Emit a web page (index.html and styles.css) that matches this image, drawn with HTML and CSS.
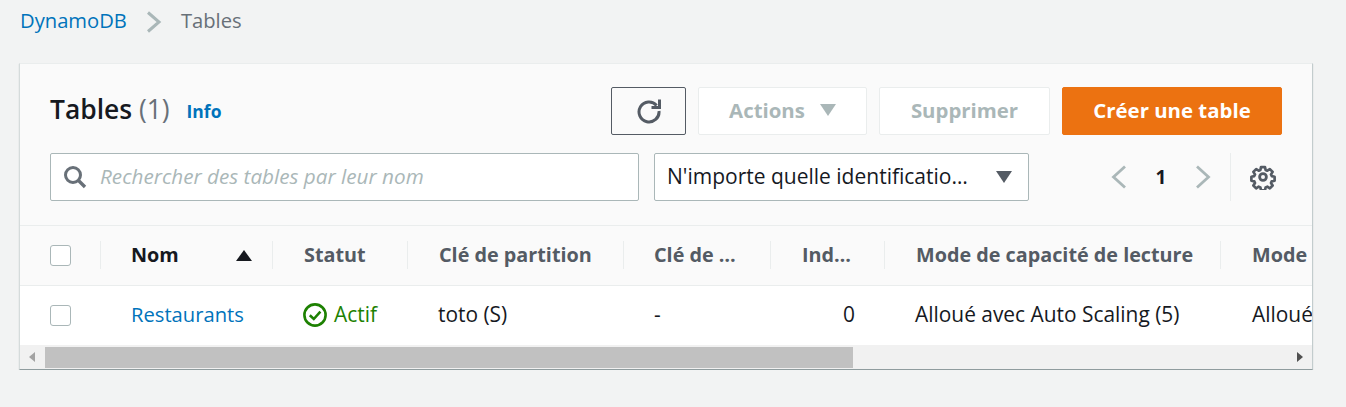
FILE: index.html
```html
<!DOCTYPE html>
<html lang="fr">
<head>
    <meta charset="UTF-8">
    <title>Tables</title>
    <link rel="stylesheet" href="styles.css">
</head>
<body>
    <nav class="crumbs">
        <a class="crumb-link" href="#">DynamoDB</a>
        <svg class="crumb-sep" width="16" height="22" viewBox="0 0 16 22"><path d="M2 1.5 13 11 2 20.5" fill="none" stroke="#aab7b8" stroke-width="3"/></svg>
        <span class="crumb-current">Tables</span>
    </nav>

    <section class="card">
        <header class="card-head">
            <div class="title-row">
                <h1 class="title">Tables <span class="count">(1)</span></h1>
                <a class="info" href="#">Info</a>
                <div class="actions">
                    <button class="btn btn-refresh" aria-label="Actualiser">
                        <svg width="26" height="26" viewBox="0 0 26 26"><path d="M20.6 7.4A10 10 0 1 0 23 13" fill="none" stroke="#545b64" stroke-width="3"/><path d="M23.5 1.5V9.5H15.5" fill="none" stroke="#545b64" stroke-width="3"/></svg>
                    </button>
                    <button class="btn btn-disabled btn-actions">Actions <i class="caret caret-light"></i></button>
                    <button class="btn btn-disabled btn-delete">Supprimer</button>
                    <button class="btn btn-primary">Créer une table</button>
                </div>
            </div>
            <div class="filter-row">
                <div class="search">
                    <svg width="24" height="24" viewBox="0 0 24 24"><circle cx="10" cy="10" r="7.5" fill="none" stroke="#687078" stroke-width="3"/><path d="M15.5 15.5 22 22" stroke="#687078" stroke-width="3.4"/></svg>
                    <span class="search-text">Rechercher des tables par leur nom</span>
                </div>
                <div class="select">
                    <span>N'importe quelle identificatio…</span>
                    <i class="caret"></i>
                </div>
                <div class="pager">
                    <svg width="16" height="24" viewBox="0 0 16 24"><path d="M14 1.5 2.5 12 14 22.5" fill="none" stroke="#aab7b8" stroke-width="2.8"/></svg>
                    <span class="page-num">1</span>
                    <svg width="16" height="24" viewBox="0 0 16 24"><path d="M2 1.5 13.5 12 2 22.5" fill="none" stroke="#aab7b8" stroke-width="2.8"/></svg>
                </div>
                <div class="prefs">
                    <svg width="26" height="26" viewBox="0 0 26 26"><path d="M10.8 2h4.4l.7 3.2 1.9.8 2.8-1.8 3.1 3.1-1.8 2.8.8 1.9 3.2.7v4.4l-3.2.7-.8 1.9 1.8 2.8-3.1 3.1-2.8-1.8-1.9.8-.7 3.2h-4.4l-.7-3.2-1.9-.8-2.8 1.8-3.1-3.1 1.8-2.8-.8-1.9-3.2-.7v-4.4l3.2-.7.8-1.9-1.8-2.8 3.1-3.1 2.8 1.8 1.9-.8z" transform="translate(1.3 1.3) scale(.9)" fill="none" stroke="#545b64" stroke-width="3" stroke-linejoin="round"/><circle cx="13" cy="13" r="3.4" fill="none" stroke="#545b64" stroke-width="2.8"/></svg>
                </div>
            </div>
        </header>

        <div class="table-wrap">
            <table class="tbl">
                <colgroup>
                    <col class="c-check"><col class="c-name"><col class="c-status"><col class="c-key"><col class="c-sort"><col class="c-idx"><col class="c-read"><col class="c-write">
                </colgroup>
                <thead>
                    <tr>
                        <th><div class="th-in th-check"><span class="box"></span></div></th>
                        <th><div class="th-in th-active">Nom <i class="sort-up"></i></div></th>
                        <th><div class="th-in">Statut</div></th>
                        <th><div class="th-in">Clé de partition</div></th>
                        <th><div class="th-in th-sort">Clé de …</div></th>
                        <th><div class="th-in">Ind…</div></th>
                        <th><div class="th-in">Mode de capacité de lecture</div></th>
                        <th><div class="th-in th-last">Mode</div></th>
                    </tr>
                </thead>
                <tbody>
                    <tr>
                        <td class="td-check"><span class="box"></span></td>
                        <td><a class="row-link" href="#">Restaurants</a></td>
                        <td>
                            <span class="status">
                                <svg width="24" height="24" viewBox="0 0 24 24"><circle cx="12" cy="12" r="10.6" fill="none" stroke="#1d8102" stroke-width="2.6"/><path d="M6.8 12.2 10.8 16 17.4 8.6" fill="none" stroke="#1d8102" stroke-width="2.6"/></svg>
                                <span class="status-text">Actif</span>
                            </span>
                        </td>
                        <td class="td-text">toto (S)</td>
                        <td class="td-text">-</td>
                        <td class="td-text num">0</td>
                        <td class="td-text">Alloué avec Auto Scaling (5)</td>
                        <td class="td-text td-last">Alloué</td>
                    </tr>
                </tbody>
            </table>
        </div>

        <div class="scrollbar">
            <span class="arrow arrow-left"></span>
            <span class="thumb"></span>
            <span class="arrow arrow-right"></span>
        </div>
    </section>
</body>
</html>
```

FILE: styles.css
```css
* {
    box-sizing: border-box;
}

body {
    margin: 0;
    background-color: #f2f3f3;
    font-family: "Open Sans", "Noto Sans", Arial, sans-serif;
    font-size: 20.9px;
    color: #16191f;
    overflow: hidden;
}

a {
    text-decoration: none;
    color: #0073bb;
}

.crumbs {
    display: flex;
    align-items: center;
    height: 40px;
    padding-left: 20px;
    font-size: 20.2px;
}

.crumb-sep {
    margin: 3px 19px 0 19px;
}

.crumb-current {
    color: #687078;
}

.card {
    width: 1294px;
    margin: 23px 0 0 19px;
    border-left: 1px solid #d5dbdb;
    border-right: 1px solid #c3cccd;
    border-top: 1px solid #eaeded;
    border-bottom: 1px solid #8f9c9e;
    background-color: #fff;
    box-shadow: 0 1px 1px 0 rgba(0, 28, 36, 0.2);
}

.card-head {
    height: 162px;
    padding: 23px 30px 0 30px;
    background-color: #fafafa;
    border-bottom: 1px solid #eaeded;
}

.title-row {
    display: flex;
    align-items: center;
    height: 48px;
}

.title {
    margin: 0 0 5px 0;
    font-size: 26.4px;
    font-weight: 600;
    line-height: 44px;
}

.count {
    font-weight: 400;
    color: #687078;
}

.info {
    margin-left: 17px;
    font-size: 17.5px;
    font-weight: 700;
}

.actions {
    display: flex;
    gap: 12px;
    margin-left: auto;
}

.btn {
    display: flex;
    align-items: center;
    justify-content: center;
    height: 48px;
    padding: 0 0 2px 0;
    border-radius: 2px;
    font-family: inherit;
    font-size: 20.4px;
    font-weight: 700;
    background-color: #fff;
}

.btn-refresh {
    width: 75px;
    padding-bottom: 0;
    background-color: #fafafa;
    border: 1px solid #545b64;
}

.btn-disabled {
    color: #aab7b8;
    border: 1px solid #eaeded;
}

.btn-actions {
    width: 169px;
    gap: 15px;
}

.btn-delete {
    width: 171px;
}

.btn-primary {
    width: 220px;
    color: #fff;
    background-color: #ec7211;
    border: 1px solid #ec7211;
}

.caret {
    display: inline-block;
    border-left: 8px solid transparent;
    border-right: 8px solid transparent;
    border-top: 12px solid #545b64;
}

.caret-light {
    border-top-color: #aab7b8;
}

.filter-row {
    display: flex;
    align-items: center;
    height: 48px;
    margin-top: 18px;
}

.search {
    display: flex;
    flex: none;
    align-items: center;
    gap: 13px;
    width: 589px;
    height: 48px;
    padding: 0 0 0 12px;
    background-color: #fff;
    border: 1px solid #aab7b8;
    border-radius: 2px;
}

.search-text {
    padding-bottom: 2px;
    font-size: 20.7px;
    font-style: italic;
    color: #aab7b8;
}

.select {
    display: flex;
    flex: none;
    align-items: center;
    justify-content: space-between;
    width: 375px;
    height: 48px;
    margin-left: 15px;
    padding: 0 16px 0 12px;
    background-color: #fff;
    border: 1px solid #aab7b8;
    border-radius: 2px;
    font-size: 21px;
    white-space: nowrap;
}

.select span {
    padding-bottom: 2px;
}

.pager {
    display: flex;
    flex: none;
    align-items: center;
    justify-content: space-between;
    width: 100px;
    margin-left: 82px;
}

.page-num {
    font-size: 19px;
    font-weight: 700;
}

.prefs {
    display: flex;
    flex: none;
    align-items: center;
    justify-content: center;
    height: 48px;
    margin-left: 19px;
    padding-left: 19px;
    border-left: 1px solid #eaeded;
}

.table-wrap {
    overflow: hidden;
}

.tbl {
    table-layout: fixed;
    width: 1292px;
    border-collapse: collapse;
}

.c-check { width: 81px; }
.c-name { width: 172px; }
.c-status { width: 135px; }
.c-key { width: 216px; }
.c-sort { width: 147px; }
.c-idx { width: 114px; }
.c-read { width: 336px; }
.c-write { width: 91px; }

th {
    height: 59px;
    padding: 0;
    background-color: #fafafa;
    border-bottom: 1px solid #eaeded;
    font-size: 19.8px;
    font-weight: 700;
    text-align: left;
    color: #545b64;
}

.th-in {
    display: flex;
    align-items: center;
    height: 28px;
    padding: 0 0 2px 31px;
    border-right: 1px solid #eaeded;
    white-space: nowrap;
}

.th-check {
    padding: 0 0 0 30px;
}

.th-sort {
    padding-left: 30px;
}

.th-active {
    justify-content: space-between;
    padding-left: 30px;
    padding-right: 20px;
    color: #16191f;
}

.th-last {
    border-right: 0;
}

.sort-up {
    margin-top: 2px;
    border-left: 8px solid transparent;
    border-right: 8px solid transparent;
    border-bottom: 11px solid #16191f;
}

td {
    height: 60px;
    padding: 0 0 0 30px;
    white-space: nowrap;
    color: #16191f;
}

.td-text,
td a {
    padding-bottom: 2px;
}

.box {
    display: block;
    width: 21px;
    height: 21px;
    background-color: #fff;
    border: 1px solid #aab7b8;
    border-radius: 3px;
}

.row-link {
    display: block;
    font-size: 20.2px;
}

.num {
    padding-right: 30px;
    text-align: right;
}

.td-last {
    padding-left: 31px;
}

.status {
    display: flex;
    align-items: center;
    gap: 7px;
    color: #1d8102;
}

.status-text {
    padding-bottom: 2px;
}

.scrollbar {
    display: flex;
    align-items: center;
    height: 24px;
    background-color: #f1f1f1;
}

.thumb {
    width: 808px;
    height: 21px;
    margin-left: 10px;
    background-color: #c1c1c1;
}

.arrow {
    border-top: 5px solid transparent;
    border-bottom: 5px solid transparent;
}

.arrow-left {
    margin-left: 9px;
    border-right: 6px solid #a3a3a3;
}

.arrow-right {
    margin-left: auto;
    margin-right: 9px;
    border-left: 6px solid #505050;
}
```
